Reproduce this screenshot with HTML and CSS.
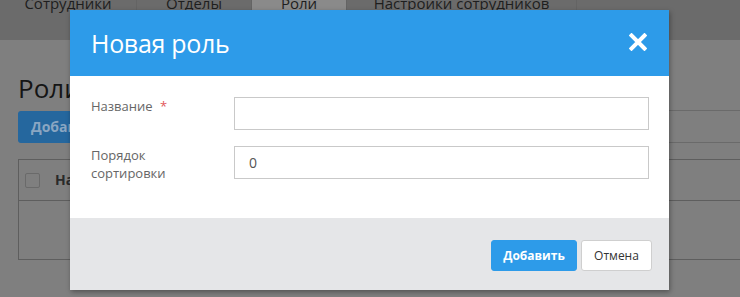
FILE: index.html
```html
<!DOCTYPE html>
<html lang="ru">

<head>
    <meta charset="utf-8">
    <title>Роли</title>
    <link rel="stylesheet" href="styles.css">
</head>

<body>
    <div class="page">
        <ul class="tabs">
            <li class="tab-1">Сотрудники</li>
            <li class="tab-2">Отделы</li>
            <li class="tab-3 current">Роли</li>
            <li class="tab-4">Настройки сотрудников</li>
        </ul>
        <div class="content">
            <h1 class="page-title">Роли</h1>
            <div class="toolbar">
                <span class="btn-add">Добавить</span>
                <span class="filter"></span>
            </div>
            <div class="grid">
                <div class="grid-head">
                    <span class="check"></span>
                    <span class="col-name">Название</span>
                </div>
                <div class="grid-body"></div>
            </div>
        </div>
    </div>

    <div class="modal">
        <div class="modal-head">
            <span class="modal-title">Новая роль</span>
            <span class="modal-close">
                <svg width="18" height="18" viewBox="0 0 18 18">
                    <path d="M2.5 2.5L15.5 15.5M15.5 2.5L2.5 15.5" stroke="#fff" stroke-width="4" stroke-linecap="square" />
                </svg>
            </span>
        </div>
        <div class="modal-body">
            <div class="form-row">
                <label class="form-label">Название <em class="req">*</em></label>
                <div class="form-input"></div>
            </div>
            <div class="form-row">
                <label class="form-label">Порядок<br>сортировки</label>
                <div class="form-input">0</div>
            </div>
        </div>
        <div class="modal-foot">
            <span class="btn btn-primary">Добавить</span>
            <span class="btn btn-default">Отмена</span>
        </div>
    </div>
</body>

</html>
```

FILE: styles.css
```css
/* reset */

body,
div,
ul,
li,
h1 {
    margin: 0;
    padding: 0;
}

ul {
    list-style-type: none;
}

body {
    position: relative;
    height: 297px;
    overflow: hidden;
    background: #7f7f7f;
    font: 13px/18px "Open Sans", Arial, sans-serif;
    color: #222;
}

/* вкладки сверху */

.tabs {
    display: flex;
    height: 57px;
    margin-top: -17px;
    background: #6b6b6b;
}

.tabs li {
    font-size: 15px;
    line-height: 40px;
    text-align: center;
    border-right: 1px solid #646464;
    color: #1e1e1e;
}

.tabs .tab-1 {
    width: 136px;
}

.tabs .tab-2 {
    width: 114px;
}

.tabs .tab-3 {
    width: 94px;
}

.tabs .tab-4 {
    width: 229px;
}

.tabs li.current {
    background: #8a8a8a;
}

/* содержимое под затемнением */

.content {
    padding: 0 0 0 18px;
}

.page-title {
    margin-top: 30px;
    font-size: 26px;
    line-height: 36px;
    font-weight: 400;
    color: #151515;
}

.toolbar {
    display: flex;
    margin-top: 5px;
    height: 32px;
}

.btn-add {
    width: 110px;
    height: 32px;
    line-height: 32px;
    padding-left: 13px;
    box-sizing: border-box;
    border-radius: 3px;
    background: #25679e;
    color: #8aa6c2;
    font-size: 14px;
    font-weight: 700;
}

.filter {
    flex: 1;
    margin-left: 460px;
    margin-top: -1px;
    border-top: 1px solid #6a6a6a;
    border-bottom: 1px solid #6a6a6a;
}

.grid {
    margin-top: 16px;
    margin-right: -10px;
    border: 1px solid #5e5e5e;
    height: 99px;
}

.grid-head {
    display: flex;
    align-items: center;
    height: 40px;
    border-bottom: 1px solid #5e5e5e;
}

.check {
    width: 13px;
    height: 13px;
    margin-left: 6px;
    border: 1px solid #6a6a6a;
    border-radius: 2px;
}

.col-name {
    margin-left: 15px;
    font-size: 14px;
    font-weight: 700;
    color: #2a2a2a;
}

/* модальное окно */

.modal {
    position: absolute;
    left: 70px;
    top: 10px;
    width: 599px;
    background: #fff;
    box-shadow: 1px 2px 5px rgba(0, 0, 0, 0.35);
}

.modal-head {
    display: flex;
    align-items: center;
    justify-content: space-between;
    height: 66px;
    padding: 0 22px 0 21px;
    background: #2d9be9;
}

.modal-title {
    font-size: 25px;
    line-height: 66px;
    color: #fff;
    letter-spacing: -0.3px;
}

.modal-close {
    display: flex;
    margin-top: -3px;
}

.modal-body {
    padding: 21px 20px 36px 21px;
}

.form-row {
    display: flex;
    margin-bottom: 16px;
}

.form-row:last-child {
    margin-bottom: 0;
}

.form-label {
    width: 143px;
    padding-top: 0;
    color: #666;
    font-size: 13px;
    line-height: 18px;
}

.form-label .req {
    font-style: normal;
    color: #e2585a;
    margin-left: 4px;
}

.form-input {
    flex: 1;
    height: 33px;
    box-sizing: border-box;
    border: 1px solid #c9c9c9;
    padding: 0 14px;
    line-height: 31px;
    font-size: 14px;
    color: #555;
}

.modal-foot {
    display: flex;
    justify-content: flex-end;
    gap: 4px;
    height: 72px;
    padding: 22px 17px 0 0;
    box-sizing: border-box;
    background: #e5e6e8;
}

.btn {
    height: 31px;
    line-height: 29px;
    box-sizing: border-box;
    border-radius: 3px;
    text-align: center;
    font-size: 12px;
}

.btn-primary {
    width: 86px;
    border: 1px solid #2d9be9;
    background: #2d9be9;
    color: #fff;
    font-weight: 700;
}

.btn-default {
    width: 71px;
    border: 1px solid #cfcfcf;
    background: #fff;
    color: #333;
}
```
